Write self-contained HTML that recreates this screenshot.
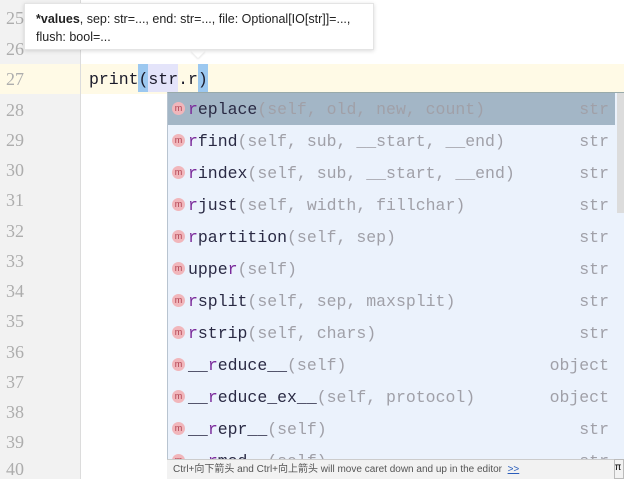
<!DOCTYPE html>
<html><head><style>
*{margin:0;padding:0;box-sizing:border-box}
body{width:624px;height:479px;overflow:hidden;background:#fff;position:relative;font-family:"Liberation Mono",monospace}
.gut{position:absolute;left:0;top:0;width:81px;height:479px;background:#f2f2f2;border-right:1px solid #dcdcdc}
.ln{position:absolute;left:6px;font-family:"Liberation Serif",serif;font-size:18px;color:#adadad}
.cur{position:absolute;left:0;top:64px;width:624px;height:30px;background:#fffae6}
.code{position:absolute;left:89px;top:68px;font-size:16.5px;color:#1a1a2a;line-height:24px;white-space:pre}
.pop{position:absolute;left:167px;top:92px;width:457px;height:387px;background:#ebf2fc;border-left:1px solid #b8c4d0;border-top:1px solid #9aa}
.row{position:absolute;left:0;width:447px;height:32px;font-size:16.5px;line-height:34px;white-space:pre}
.row.sel{background:#a3b6c6}
.ic{position:absolute;left:4px;top:9px;width:13px;height:13px;border-radius:50%;background:#f1b6bb;color:#b04050;font-size:9px;line-height:12px;text-align:center;font-family:"Liberation Sans",sans-serif}
.nm{position:absolute;left:20px;color:#2a2a44}
.nm b{font-weight:normal;color:#7a2a9a}
.nm i{font-style:normal;color:#a0a0a8}
.ty{position:absolute;right:6px;color:#a0a0a8}
.sb{position:absolute;left:447px;top:0;width:10px;height:367px;background:#ebf2fc}
.th{position:absolute;left:449px;top:0;width:8px;height:120px;background:#dcdcdc}
.foot{position:absolute;left:167px;top:459px;width:447px;height:20px;background:#f2f2f2;border-top:1px solid #ccc;font-family:"Liberation Sans","Noto Sans CJK SC",sans-serif;font-size:10px;color:#555;line-height:19px;padding-left:6px}
.foot u{color:#2a5dbb}
.tip{position:absolute;left:24px;top:3px;width:350px;height:47px;background:#fff;border:1px solid #e4e4e4;box-shadow:0 1px 4px rgba(0,0,0,.15);font-family:"Liberation Sans",sans-serif;font-size:12.5px;color:#222;padding:6px 0 0 11px;line-height:18px}
.arr{position:absolute;left:193px;top:46px;width:10px;height:10px;background:#fff;transform:rotate(45deg);box-shadow:1px 1px 2px rgba(0,0,0,.1)}
</style></head><body>
<div class="gut"></div>
<div class="cur"></div>
<div style="position:absolute;left:80px;top:0;width:1px;height:479px;background:#dcdcdc"></div>
<div class="ln" style="top:8px">25</div>
<div class="ln" style="top:39px">26</div>
<div class="ln" style="top:69px">27</div>
<div class="ln" style="top:100px">28</div>
<div class="ln" style="top:130px">29</div>
<div class="ln" style="top:160px">30</div>
<div class="ln" style="top:190px">31</div>
<div class="ln" style="top:221px">32</div>
<div class="ln" style="top:251px">33</div>
<div class="ln" style="top:281px">34</div>
<div class="ln" style="top:311px">35</div>
<div class="ln" style="top:342px">36</div>
<div class="ln" style="top:372px">37</div>
<div class="ln" style="top:402px">38</div>
<div class="ln" style="top:432px">39</div>
<div class="ln" style="top:459px">40</div>
<div style="position:absolute;left:138px;top:64px;width:10px;height:28px;background:#9cc8f0"></div>
<div style="position:absolute;left:148px;top:64px;width:30px;height:28px;background:#e4e4fa"></div>
<div style="position:absolute;left:198px;top:64px;width:10px;height:28px;background:#9cc8f0"></div>
<div class="code">print(str.r)</div>
<div class="pop">
<div class="row sel" style="top:0"><span class="ic">m</span><span class="nm"><b>r</b>eplace<i>(self, old, new, count)</i></span><span class="ty">str</span></div>
<div class="row" style="top:32px"><span class="ic">m</span><span class="nm"><b>r</b>find<i>(self, sub, __start, __end)</i></span><span class="ty">str</span></div>
<div class="row" style="top:64px"><span class="ic">m</span><span class="nm"><b>r</b>index<i>(self, sub, __start, __end)</i></span><span class="ty">str</span></div>
<div class="row" style="top:96px"><span class="ic">m</span><span class="nm"><b>r</b>just<i>(self, width, fillchar)</i></span><span class="ty">str</span></div>
<div class="row" style="top:128px"><span class="ic">m</span><span class="nm"><b>r</b>partition<i>(self, sep)</i></span><span class="ty">str</span></div>
<div class="row" style="top:160px"><span class="ic">m</span><span class="nm">uppe<b>r</b><i>(self)</i></span><span class="ty">str</span></div>
<div class="row" style="top:192px"><span class="ic">m</span><span class="nm"><b>r</b>split<i>(self, sep, maxsplit)</i></span><span class="ty">str</span></div>
<div class="row" style="top:224px"><span class="ic">m</span><span class="nm"><b>r</b>strip<i>(self, chars)</i></span><span class="ty">str</span></div>
<div class="row" style="top:256px"><span class="ic">m</span><span class="nm">__<b>r</b>educe__<i>(self)</i></span><span class="ty">object</span></div>
<div class="row" style="top:288px"><span class="ic">m</span><span class="nm">__<b>r</b>educe_ex__<i>(self, protocol)</i></span><span class="ty">object</span></div>
<div class="row" style="top:320px"><span class="ic">m</span><span class="nm">__<b>r</b>epr__<i>(self)</i></span><span class="ty">str</span></div>
<div class="row" style="top:352px"><span class="ic">m</span><span class="nm">__<b>r</b>mod__<i>(self)</i></span><span class="ty">str</span></div>
<div class="sb"></div><div class="th"></div>
</div>
<div class="foot">Ctrl+向下箭头 and Ctrl+向上箭头 will move caret down and up in the editor &nbsp;<u>&gt;&gt;</u></div>
<div style="position:absolute;left:614px;top:459px;width:10px;height:20px;background:#f2f2f2;border:1px solid #bbb;font-size:10px;line-height:18px">π</div>
<div class="arr"></div>
<div class="tip"><b>*values</b>, sep: str=..., end: str=..., file: Optional[IO[str]]=...,<br>flush: bool=...</div>
</body></html>
